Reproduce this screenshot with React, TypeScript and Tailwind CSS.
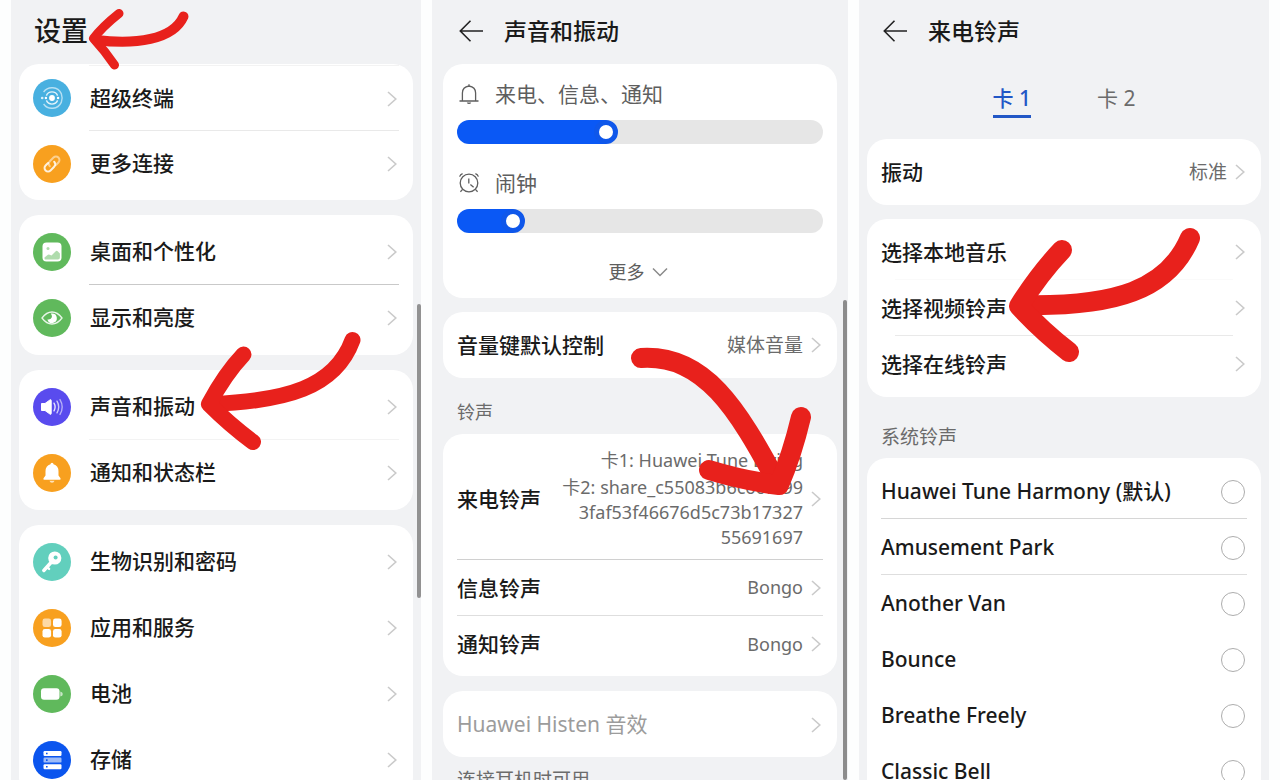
import { useState } from 'react'
import type { ReactNode } from 'react'
import clsx from 'clsx'

type MenuItem = { label: string; icon: ReactNode; color: string; divider?: string }

const menuGroups: MenuItem[][] = [
  [
    { label: '超级终端', icon: <DeviceIcon />, color: 'bg-[#48b0e0]', divider: 'border-[#e9e9e9]' },
    { label: '更多连接', icon: <LinkIcon />, color: 'bg-[#f8a01f]' },
  ],
  [
    { label: '桌面和个性化', icon: <PictureIcon />, color: 'bg-[#60b95c]', divider: 'border-[#c9c9c9]' },
    { label: '显示和亮度', icon: <EyeIcon />, color: 'bg-[#60b95c]' },
  ],
  [
    { label: '声音和振动', icon: <SpeakerIcon />, color: 'bg-[#594bee]', divider: 'border-[#f3f3f3]' },
    { label: '通知和状态栏', icon: <BellIcon />, color: 'bg-[#f8a01f]' },
  ],
  [
    { label: '生物识别和密码', icon: <KeyIcon />, color: 'bg-[#62cfbd]' },
    { label: '应用和服务', icon: <GridIcon />, color: 'bg-[#f8a01f]' },
    { label: '电池', icon: <BatteryIcon />, color: 'bg-[#60b95c]' },
    { label: '存储', icon: <StorageIcon />, color: 'bg-[#0b55ee]' },
  ],
]

const localOptions = [
  { label: '选择本地音乐', divider: 'border-[#fafafa]' },
  { label: '选择视频铃声', divider: 'border-[#e9e9e9]' },
  { label: '选择在线铃声', divider: 'border-transparent' },
]

const ringtones = [
  { name: 'Huawei Tune Harmony (默认)', divider: 'border-[#d6d6d6]' },
  { name: 'Amusement Park', divider: 'border-[#dedede]' },
  { name: 'Another Van', divider: 'border-transparent' },
  { name: 'Bounce', divider: 'border-transparent' },
  { name: 'Breathe Freely', divider: 'border-transparent' },
  { name: 'Classic Bell', divider: 'border-transparent' },
]

/* Menu icons, all on a 38px disc */

function Glyph({ children }: { children: ReactNode }) {
  return (
    <svg viewBox="0 0 38 38" className="size-full" fill="none" stroke="none" aria-hidden="true">
      {children}
    </svg>
  )
}

function DeviceIcon() {
  return (
    <Glyph>
      <circle cx="19" cy="19" r="2.9" fill="#fff" />
      <path d="M13.4 16.6a6.1 6.1 0 0 1 11.2 0M13.4 21.4a6.1 6.1 0 0 0 11.2 0" stroke="#fff" strokeOpacity="0.85" strokeWidth="1.4" />
      <path d="M10.6 13a10.3 10.3 0 0 1 17.700 1.600q1.600 4.400 0 8.800a10.3 10.3 0 0 1-17.700 1.600" stroke="#fff" strokeOpacity="0.6" strokeWidth="1.4" />
      <circle cx="9.200" cy="19" r="1.300" fill="#fff" fillOpacity="0.8" />
      <circle cx="12.900" cy="19" r="1.200" fill="#fff" />
      <circle cx="25.100" cy="19" r="1.200" fill="#fff" />
    </Glyph>
  )
}

function LinkIcon() {
  return (
    <Glyph>
      <g transform="rotate(-45 19 19)" strokeWidth="2" strokeLinecap="round">
        <path d="M17 15.500h-3.600a3.500 3.500 0 0 0 0 7h5.200a3.500 3.500 0 0 0 3.500-3.500" stroke="#fff" strokeOpacity="0.85" />
        <path d="M21 22.500h3.600a3.500 3.500 0 0 0 0-7h-5.200a3.500 3.500 0 0 0-3.500 3.500" stroke="#fff" strokeOpacity="0.5" />
      </g>
    </Glyph>
  )
}

function PictureIcon() {
  return (
    <Glyph>
      <rect x="9.5" y="9.5" width="19" height="19" rx="4" fill="#fff" />
      <circle cx="15" cy="15.400" r="1.500" fill="#60b95c" fillOpacity="0.5" />
      <path d="M11.500 24.500l3.400-2.700q1.200-.8 2.400.2l1.200.6 4-4.200q1.300-1.200 2.400 0l2 2.200v4q0 2-2 2H12.500q-1 0-1-1z" fill="#60b95c" fillOpacity="0.5" />
    </Glyph>
  )
}

function EyeIcon() {
  return (
    <Glyph>
      <path d="M9 19q4.400-6 10-6t10 6q-4.400 6-10 6t-10-6z" stroke="#fff" strokeOpacity="0.85" strokeWidth="1.3" />
      <path d="M19 14.400a4.800 4.800 0 1 1-4.600 6q3.400 0.400 4.300-1.800.6-1.800-.8-4z" fill="#fff" />
    </Glyph>
  )
}

function SpeakerIcon() {
  return (
    <Glyph>
      <path d="M8.500 15.500h3.500l5-3.600q1.200-.7 1.200.7v12.800q0 1.400-1.200.7l-5-3.600H8.500z" fill="#fff" stroke="#fff" strokeLinejoin="round" />
      <path d="M21 15.200q2.200 3.800 0 7.600" stroke="#fff" strokeOpacity="0.85" strokeWidth="1.400" strokeLinecap="round" />
      <path d="M24 13.200q3.400 5.800 0 11.600" stroke="#fff" strokeOpacity="0.7" strokeWidth="1.400" strokeLinecap="round" />
      <path d="M27 11.600q4.400 7.400 0 14.800" stroke="#fff" strokeOpacity="0.55" strokeWidth="1.400" strokeLinecap="round" />
    </Glyph>
  )
}

function BellIcon() {
  return (
    <Glyph>
      <path d="M19 8.800q1.500 0 1.500 1.500 5 1.300 5 7.200v4l2 2.800q.6 1.500-1 1.500h-15q-1.600 0-1-1.500l2-2.800v-4q0-5.900 5-7.200 0-1.500 1.500-1.500z" fill="#fff" />
      <path d="M16.500 26.800h5q-.5 2-2.500 2t-2.500-2z" fill="#fff" fillOpacity="0.7" />
    </Glyph>
  )
}

function KeyIcon() {
  return (
    <Glyph>
      <path d="M18 19.500l-7.200 8" stroke="#fff" strokeWidth="3.400" strokeLinecap="round" />
      <path d="M14.500 24.500l1.600 1.400" stroke="#fff" strokeWidth="2.400" strokeLinecap="round" />
      <circle cx="21.800" cy="15" r="6.600" fill="#fff" />
      <circle cx="22.600" cy="14.600" r="2" fill="#62cfbd" />
    </Glyph>
  )
}

function GridIcon() {
  return (
    <Glyph>
      <rect x="9.500" y="9.500" width="8.600" height="8.600" rx="2.400" fill="#fff" fillOpacity="0.6" />
      <rect x="20" y="9.500" width="8.600" height="8.600" rx="2.400" fill="#fff" />
      <rect x="9.500" y="20" width="8.600" height="8.600" rx="2.400" fill="#fff" />
      <rect x="20" y="20" width="8.600" height="8.600" rx="2.400" fill="#fff" />
    </Glyph>
  )
}

function BatteryIcon() {
  return (
    <Glyph>
      <rect x="8" y="13.200" width="18.500" height="11.600" rx="3" fill="#fff" />
      <path d="M27.300 16.400q2.500.6 2.500 2.600t-2.500 2.600z" fill="#fff" fillOpacity="0.65" />
    </Glyph>
  )
}

function StorageIcon() {
  return (
    <Glyph>
      <rect x="10.500" y="10" width="18" height="5" rx="1.200" fill="#fff" />
      <rect x="10.500" y="16.600" width="18" height="5" rx="1.200" fill="#fff" fillOpacity="0.6" />
      <rect x="10.500" y="23.200" width="18" height="5" rx="1.200" fill="#fff" />
      <path d="M13 12.500h1.600M13 19.100h1.600M13 25.700h1.600" stroke="#0b55ee" strokeWidth="1.600" />
    </Glyph>
  )
}

function BellOutline() {
  return (
    <svg viewBox="0 0 22 22" className="size-[22px]" fill="none" stroke="#5e5e5e" strokeWidth="1.300" aria-hidden="true">
      <path d="M4.400 17.800V10q0-6 6.600-7 6.600 1 6.600 7v7.800M1.500 18h19M11 3V1.200" />
      <path d="M8.800 19.400h4.400q-.4 1.600-2.200 1.600t-2.200-1.600z" fill="#5e5e5e" stroke="none" />
    </svg>
  )
}

function AlarmIcon() {
  return (
    <svg viewBox="0 0 22 22" className="size-[22px]" fill="none" stroke="#5e5e5e" strokeWidth="1.300" aria-hidden="true">
      <circle cx="11" cy="11" r="8.800" />
      <path d="M10.800 6.400v5M12.400 12.400l3.200 2.800M1.600 4.600q.8-2.200 3-3M20.400 4.600q-.8-2.200-3-3M4.600 17.400l-2.200 2.400M17.400 17.400l2.200 2.400" />
    </svg>
  )
}

function ChevronRight() {
  return (
    <svg viewBox="0 0 10 18" className="h-[18px] w-[10px] shrink-0" fill="none" stroke="#cacaca" strokeWidth="1.600" aria-hidden="true">
      <path d="M1 2L8.800 9L1 16" />
    </svg>
  )
}

function BackButton() {
  return (
    <button type="button" aria-label="返回" className="flex size-6 items-center justify-center">
      <svg viewBox="0 0 24 24" className="size-6" fill="none" stroke="#222" strokeWidth="1.600" aria-hidden="true">
        <path d="M24 12H1.500M11.500 1.800L1.300 12l10.200 10.200" />
      </svg>
    </button>
  )
}

function Card({ className, children }: { className?: string; children: ReactNode }) {
  return <div className={clsx('shrink-0 rounded-[20px] bg-white px-[14px]', className)}>{children}</div>
}

function Panel({ className, children }: { className?: string; children: ReactNode }) {
  return <section className={clsx('relative flex min-w-0 flex-col overflow-hidden bg-[#f1f2f4]', className)}>{children}</section>
}

function Arrow({ className, viewBox, width, children }: { className: string; viewBox: string; width: number; children: ReactNode }) {
  return (
    <svg
      viewBox={viewBox}
      className={clsx('pointer-events-none absolute', className)}
      fill="none"
      stroke="#e8211c"
      strokeWidth={width}
      strokeLinecap="round"
      strokeLinejoin="round"
      aria-hidden="true"
    >
      {children}
    </svg>
  )
}

function VolumeSlider({ id, icon, label, initial }: { id: string; icon: ReactNode; label: string; initial: number }) {
  const [value, setValue] = useState(initial)
  const edge = `calc((100% - 24px) * ${value / 100} + 12px)`

  return (
    <div>
      <label htmlFor={id} className="flex h-[30px] items-center gap-[15px] pl-px text-[21px] leading-[30px] text-[#5e5e5e]">
        {icon}
        {label}
      </label>
      <input
        id={id}
        type="range"
        min={0}
        max={100}
        value={value}
        onChange={(e) => setValue(Number(e.target.value))}
        style={{ background: `linear-gradient(to right, #0a58f5 ${edge}, #e6e6e6 ${edge})` }}
        className="mt-[11px] block h-6 w-full appearance-none rounded-full outline-none [&::-webkit-slider-thumb]:size-6 [&::-webkit-slider-thumb]:appearance-none [&::-webkit-slider-thumb]:rounded-full [&::-webkit-slider-thumb]:border-5 [&::-webkit-slider-thumb]:border-[#0f57ea] [&::-webkit-slider-thumb]:bg-white"
      />
    </div>
  )
}

function ValueRow({ label, value, className }: { label: string; value?: ReactNode; className?: string }) {
  return (
    <button type="button" className={clsx('flex w-full items-center gap-2 pr-0.5 text-left', className)}>
      <span className="flex-1 whitespace-nowrap text-[21px] leading-[30px] font-medium">{label}</span>
      {value && <span className="text-right text-[18px] leading-[25px] font-normal text-[#6b6b6b]">{value}</span>}
      <ChevronRight />
    </button>
  )
}

function SettingsPanel() {
  return (
    <Panel className="gap-[15px] px-2">
      <header className="-mb-[15px] flex h-16 shrink-0 items-center px-[15px] pb-[3px]">
        <h1 className="text-[27px] leading-9 font-medium">设置</h1>
      </header>
      {menuGroups.map((group, i) => (
        <Card key={group[0].label} className={i === 0 ? 'pt-px pb-[3px]' : 'py-1'}>
          {group.map((item, j) => (
            <button key={item.label} type="button" className="flex h-[66px] w-full items-center gap-[18px] text-left">
              <span className={clsx('size-[38px] shrink-0 overflow-hidden rounded-full', item.color)}>{item.icon}</span>
              <span
                className={clsx(
                  'flex h-full flex-1 items-center justify-between border-b pt-px pr-0.5 pl-px text-[21px] font-medium',
                  item.divider ?? 'border-transparent',
                  i === 0 && j === 0 && 'border-t border-t-[#f3f3f3]',
                )}
              >
                {item.label}
                <ChevronRight />
              </span>
            </button>
          ))}
        </Card>
      ))}
      <div className="absolute top-[304px] right-0 h-[294px] w-1 rounded-full bg-[#929292]" />
      <Arrow className="top-2 left-[74px] h-16 w-28" viewBox="85 8 112 64" width={9}>
        <path d="M183.500 16.500C173 40 135 45 96 40" strokeWidth="10" />
        <path d="M119 13.500Q102 27 93.500 38.500Q105 51 114.500 65" />
      </Arrow>
      <Arrow className="top-[320px] left-[179px] h-36 w-48" viewBox="190 320 192 144" width={16}>
        <path d="M352.500 340C335 388 285 401 212 404" />
        <path d="M243.500 354.500Q225 374 209 404Q230 425 253 442" />
      </Arrow>
    </Panel>
  )
}

function SoundPanel() {
  return (
    <Panel className="px-[11px]">
      <header className="flex h-16 shrink-0 items-center gap-[21px] px-4 pb-0.5">
        <BackButton />
        <h2 className="text-[23px] leading-8 font-medium">声音和振动</h2>
      </header>
      <Card className="pt-[15px] pb-[11px]">
        <div className="flex flex-col gap-6">
          <VolumeSlider id="volume-ring" icon={<BellOutline />} label="来电、信息、通知" initial={40} />
          <VolumeSlider id="volume-alarm" icon={<AlarmIcon />} label="闹钟" initial={13} />
        </div>
        <button type="button" className="mx-auto mt-6 flex h-[30px] items-center gap-[7px] pr-1 text-[18px] text-[#5e5e5e]">
          更多
          <svg viewBox="0 0 16 10" className="h-[10px] w-4" fill="none" stroke="#8a8a8a" strokeWidth="1.500" aria-hidden="true">
            <path d="M1 1.500L8 8.500L15 1.500" />
          </svg>
        </button>
      </Card>
      <Card className="mt-[14px]">
        <ValueRow label="音量键默认控制" value={<span className="text-[19px]">媒体音量</span>} className="h-[66px]" />
      </Card>
      <h3 className="flex h-14 shrink-0 items-center px-[14px] pt-3 text-[18px] font-normal text-[#6b6b6b]">铃声</h3>
      <Card className="py-1">
        <ValueRow
          label="来电铃声"
          value={
            <>
              <span className="mb-0.5 block">卡1: Huawei Tune Living</span>
              <span className="block">
                卡2: share_c55083b6c66f799
                <br />
                3faf53f46676d5c73b17327
                <br />
                55691697
              </span>
            </>
          }
          className="h-[122px] border-b border-[#d0d0d0]"
        />
        <ValueRow label="信息铃声" value="Bongo" className="h-14 border-b border-[#dedede]" />
        <ValueRow label="通知铃声" value="Bongo" className="h-14" />
      </Card>
      <Card className="mt-[15px]">
        <button type="button" disabled className="flex h-[66px] w-full items-center justify-between pt-0.5 pr-0.5 text-[21px] text-[#9c9c9c]">
          Huawei Histen 音效
          <ChevronRight />
        </button>
      </Card>
      <p className="shrink-0 px-[14px] pt-[10px] text-[19px] leading-[27px] text-[#6b6b6b]">连接耳机时可用</p>
      <div className="absolute top-[300px] right-px bottom-0 w-1 rounded-full bg-[#8c8c8c]" />
      <Arrow className="top-[340px] left-[188px] h-40 w-[208px]" viewBox="620 340 208 160" width={20}>
        <path d="M641 358C705 354 738 410 777 482" />
        <path d="M709 470Q745 481 779 485Q792 455 801 417" />
      </Arrow>
    </Panel>
  )
}

function RingtonePanel() {
  const [sim, setSim] = useState(1)
  const [selected, setSelected] = useState('')

  return (
    <Panel className="px-2">
      <header className="flex h-16 shrink-0 items-center gap-[21px] px-4 pb-0.5">
        <BackButton />
        <h2 className="text-[23px] leading-8 font-medium">来电铃声</h2>
      </header>
      <div role="tablist" className="flex h-[75px] shrink-0 items-start justify-center gap-[66px] pt-[18px]">
        {[1, 2].map((n) => (
          <button
            key={n}
            type="button"
            role="tab"
            aria-selected={sim === n}
            onClick={() => setSim(n)}
            className={clsx(
              'h-9 border-b-3 text-[21px] leading-[33px]',
              sim === n ? 'border-[#2257c6] font-medium text-[#2257c6]' : 'border-transparent text-[#6b6b6b]',
            )}
          >
            卡 {n}
          </button>
        ))}
      </div>
      <Card>
        <ValueRow label="振动" value={<span className="text-[19px]">标准</span>} className="h-[66px]" />
      </Card>
      <Card className="mt-[14px] py-[5px]">
        {localOptions.map((option) => (
          <div key={option.label} className="relative">
            <ValueRow label={option.label} className="h-14" />
            <div className={clsx('absolute inset-x-[14px] bottom-0 border-b', option.divider)} />
          </div>
        ))}
      </Card>
      <h3 className="flex h-[61px] shrink-0 items-center px-[14px] pt-5 text-[19px] font-normal text-[#6b6b6b]">系统铃声</h3>
      <Card className="pt-[5px] pb-1">
        {ringtones.map((tone) => (
          <label key={tone.name} className={clsx('flex h-14 items-center justify-between border-b pt-0.5 pr-0.5 text-[21px] font-medium', tone.divider)}>
            {tone.name}
            <input
              type="radio"
              name="ringtone"
              checked={selected === tone.name}
              onChange={() => setSelected(tone.name)}
              className="size-6 appearance-none rounded-full border border-[#adadad] checked:border-8 checked:border-[#0a58f5]"
            />
          </label>
        ))}
      </Card>
      <Arrow className="top-[220px] left-[141px] h-36 w-[208px] overflow-visible" viewBox="1000 220 208 144" width={20}>
        <path d="M1190 238C1168 290 1115 307 1022 305" />
        <path d="M1062 250Q1040 273 1019 306Q1042 331 1069 352" />
      </Arrow>
    </Panel>
  )
}

export default function App() {
  return (
    <main className="grid h-screen grid-cols-[410fr_416fr_410fr] gap-[11px] overflow-hidden bg-[#fdfefe] px-[11px] font-['Noto_Sans','Noto_Sans_CJK_SC',sans-serif] text-[#1a1a1a]">
      <SettingsPanel />
      <SoundPanel />
      <RingtonePanel />
    </main>
  )
}
